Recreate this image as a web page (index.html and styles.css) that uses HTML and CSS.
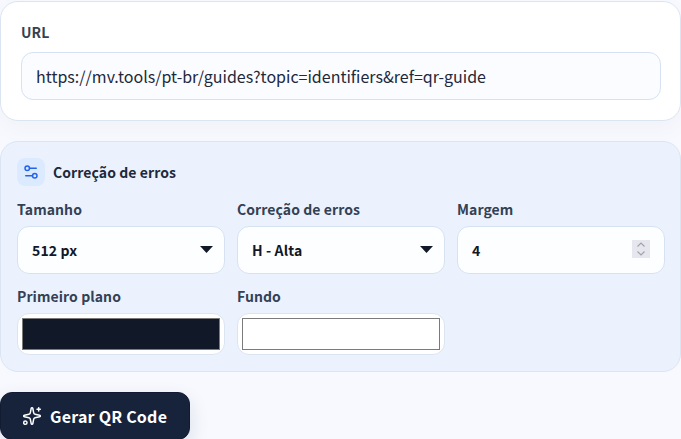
FILE: index.html
```html
<!DOCTYPE html>
<html lang="pt-BR">
<head>
<meta charset="utf-8">
<title>Gerar QR Code</title>
<link rel="stylesheet" href="styles.css">
</head>
<body>
<main class="page">
  <section class="card">
    <label class="url-label" for="url">URL</label>
    <input class="url-input" id="url" type="text" value="https://mv.tools/pt-br/guides?topic=identifiers&amp;ref=qr-guide">
  </section>
  <section class="panel">
    <div class="panel-head">
      <span class="panel-icon">
        <svg width="18" height="18" viewBox="0 0 24 24" fill="none" stroke="currentColor" stroke-width="2" stroke-linecap="round" stroke-linejoin="round"><path d="M14 17H5"/><path d="M19 7h-9"/><circle cx="17" cy="17" r="3"/><circle cx="7" cy="7" r="3"/></svg>
      </span>
      <h2 class="panel-title">Correção de erros</h2>
    </div>
    <div class="grid">
      <div class="field">
        <label class="field-label">Tamanho</label>
        <select class="control select"><option>512 px</option></select>
      </div>
      <div class="field">
        <label class="field-label">Correção de erros</label>
        <select class="control select"><option>H - Alta</option></select>
      </div>
      <div class="field">
        <label class="field-label">Margem</label>
        <input class="control" type="number" value="4">
      </div>
      <div class="field">
        <label class="field-label">Primeiro plano</label>
        <input class="swatch" type="color" value="#111827">
      </div>
      <div class="field">
        <label class="field-label">Fundo</label>
        <input class="swatch" type="color" value="#ffffff">
      </div>
    </div>
  </section>
  <button class="submit" type="button">
    <svg width="20" height="20" viewBox="0 0 24 24" fill="none" stroke="currentColor" stroke-width="1.8" stroke-linecap="round" stroke-linejoin="round"><path d="M11.017 2.814a1 1 0 0 1 1.966 0l1.051 5.558a2 2 0 0 0 1.594 1.594l5.558 1.051a1 1 0 0 1 0 1.966l-5.558 1.051a2 2 0 0 0-1.594 1.594l-1.051 5.558a1 1 0 0 1-1.966 0l-1.051-5.558a2 2 0 0 0-1.594-1.594l-5.558-1.051a1 1 0 0 1 0-1.966l5.558-1.051a2 2 0 0 0 1.594-1.594z"/><path d="M20 2v4"/><path d="M22 4h-4"/><circle cx="4" cy="20" r="2"/></svg>
    Gerar QR Code
  </button>
</main>
</body>
</html>
```
FILE: styles.css
```css
* { box-sizing: border-box; }
html, body { margin: 0; height: 439px; overflow: hidden; }
body {
  background: #f7f9ff;
  font-family: "Noto Sans CJK SC", "Noto Sans", sans-serif;
  color: #111827;
}
.page { display: flex; flex-direction: column; align-items: flex-start; padding-top: 1px; }
.card {
  width: 681px;
  height: 120px;
  padding: 20px;
  background: #fff;
  border: 1px solid #dbe5f2;
  border-radius: 18px;
  box-shadow: 0 8px 24px rgba(15, 23, 42, 0.03);
  display: flex;
  flex-direction: column;
}
.url-label { font-size: 14px; line-height: 20px; font-weight: 700; letter-spacing: 0.1px; color: #334155; margin-bottom: 10px; }
.url-input {
  width: 640px;
  height: 48px;
  padding: 0 14px;
  border: 1px solid #d6e2f1;
  border-radius: 12px;
  background: #fbfcff;
  color: #1e293b;
  font: 400 16px "Noto Sans CJK SC", sans-serif;
}
.panel {
  width: 681px;
  height: 231px;
  margin-top: 20px;
  padding: 16px;
  background: #ebf2fe;
  border: 1px solid #dbe5f2;
  border-radius: 18px;
}
.panel-head { display: flex; align-items: center; gap: 8px; height: 28px; }
.panel-icon {
  width: 28px; height: 28px;
  display: flex; align-items: center; justify-content: center;
  border-radius: 8px;
  background: #dbeafe;
  color: #2563eb;
}
.panel-title { margin: 0; font-size: 14px; line-height: 20px; font-weight: 700; letter-spacing: 0.08px; color: #1e293b; }
.grid {
  display: grid;
  grid-template-columns: repeat(3, 208px);
  column-gap: 12px;
  row-gap: 12px;
  margin-top: 13px;
}
.field { display: flex; flex-direction: column; }
.field-label { font-size: 14px; line-height: 21px; font-weight: 700; letter-spacing: 0.08px; color: #334155; margin-bottom: 6px; }
.control {
  width: 208px;
  height: 47.5px;
  padding: 1px 14px 0;
  border: 1px solid #d6e2f1;
  border-radius: 12px;
  background-color: #fdfeff;
  color: #111827;
  font: 700 14px "Noto Sans CJK SC", sans-serif;
  letter-spacing: 0.12px;
}
.select {
  appearance: none;
  background-image: url("data:image/svg+xml,%3Csvg xmlns='http://www.w3.org/2000/svg' width='13' height='7'%3E%3Cpath d='M0 0h13L6.5 7z' fill='%23111827'/%3E%3C/svg%3E");
  background-repeat: no-repeat;
  background-position: right 11px top 18.5px;
}
.control::-webkit-inner-spin-button {
  appearance: none;
  opacity: 1;
  width: 18px;
  height: 18px;
  background-color: #e6e6ee;
  background-image: url("data:image/svg+xml,%3Csvg xmlns='http://www.w3.org/2000/svg' width='18' height='18' fill='none' stroke='%23a3a3ad' stroke-width='1.2'%3E%3Cpath d='M5.5 6.5 9 3l3.5 3.5M5.5 11.5 9 15l3.5-3.5'/%3E%3C/svg%3E");
}
.swatch {
  width: 208px;
  height: 42px;
  padding: 4px;
  border: 1px solid #dbe5f2;
  border-radius: 12px;
  background: #fff;
}
.swatch::-webkit-color-swatch-wrapper { padding: 0; }
.swatch::-webkit-color-swatch { border: 1px solid #7a7a7a; }
.submit {
  display: flex;
  align-items: center;
  gap: 8px;
  width: 190px;
  height: 48px;
  margin-top: 20px;
  padding: 0 21px;
  border: 1px solid #111c33;
  border-radius: 12px;
  background: #17223b;
  color: #fff;
  font: 700 16px "Noto Sans CJK SC", sans-serif;
  letter-spacing: 0.22px;
  box-shadow: 0 8px 20px rgba(15, 23, 42, 0.12);
}
```
